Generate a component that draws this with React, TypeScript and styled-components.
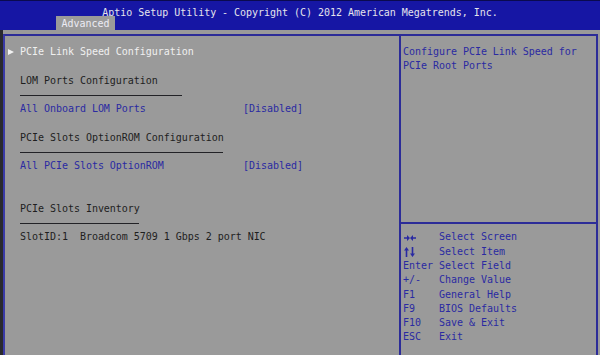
import React from "react";
import styled, { createGlobalStyle } from "styled-components";

const ROW = 14.28;
const BLUE = "#2a2aa2";

const Global = createGlobalStyle`
  html, body { margin: 0; padding: 0; background: #9a9a9a; }
  body {
    width: 600px; height: 355px; overflow: hidden;
    font-family: "DejaVu Sans Mono", "Liberation Mono", monospace;
    font-size: 10px;
    letter-spacing: -0.03px;
  }
`;

const Screen = styled.div`
  width: 600px;
  height: 355px;
  display: flex;
  flex-direction: column;
  background: #9a9a9a;
  overflow: hidden;
`;

const Header = styled.header`
  background: #1616a4;
  height: 30px;
  flex-shrink: 0;
  border-top: 1px solid #0a0a50;
  box-sizing: border-box;
  display: flex;
  flex-direction: column;
`;

const Title = styled.div`
  color: #e4e4ec;
  text-align: center;
  line-height: 14px;
  padding-top: 5px;
  height: 15px;
  box-sizing: border-box;
  flex-shrink: 0;
`;

const TabRow = styled.nav`
  display: flex;
  padding-left: 56px;
  margin-top: auto;
  height: 14px;
  flex-shrink: 0;
`;

const Tab = styled.div`
  background: #9a9a9a;
  color: #ececf4;
  width: 59px;
  height: 14px;
  line-height: 15px;
  text-align: center;
`;

const Body = styled.main`
  flex: 1;
  display: flex;
  padding: 4px 2px 0 0;
  border-left: 3px solid #2a2a2e;
  min-height: 0;
`;

const Frame = styled.section`
  flex: 1;
  display: grid;
  grid-template-columns: 394px 2px 1fr;
  border: 2px solid #2c2c98;
  border-bottom: none;
  border-left-color: #3a3aa6;
`;

const Divider = styled.div`
  background: #2c2c98;
`;

const Panel = styled.div<{ $pad: number }>`
  display: grid;
  grid-auto-rows: ${ROW}px;
  align-content: start;
  padding-top: 9px;
  padding-left: ${(p) => p.$pad}px;
`;

const Row = styled.div`
  display: grid;
  grid-template-columns: 15px 223px 1fr;
  align-items: center;
  line-height: ${ROW}px;
  white-space: pre;
`;

const Marker = styled.span`
  display: flex;
  align-items: center;
  padding-left: 3px;
`;

const Triangle = styled.span`
  width: 0;
  height: 0;
  border-top: 3.5px solid transparent;
  border-bottom: 3.5px solid transparent;
  border-left: 6px solid #f2f2f2;
`;

type Tone = "white" | "dark" | "blue";
const toneColor: Record<Tone, string> = {
  white: "#f0f0f0",
  dark: "#1e1e1e",
  blue: BLUE,
};

const Label = styled.span<{ $tone: Tone }>`
  color: ${(p) => toneColor[p.$tone]};
`;

const Value = styled.span`
  color: ${BLUE};
`;

const RuleRow = styled.div`
  display: flex;
  align-items: center;
  padding-left: 15px;
`;

const Rule = styled.div<{ $w: number }>`
  width: ${(p) => p.$w}px;
  height: 1px;
  background: #222226;
  margin-top: 1px;
`;

const Help = styled.p`
  grid-row: 1 / span 2;
  margin: 0;
  color: ${BLUE};
  line-height: ${ROW}px;
  width: 190px;
`;

const HelpRule = styled.div`
  grid-row: 13;
  align-self: center;
  height: 2px;
  background: #2c2c98;
  margin-left: -2px;
  margin-top: -1px;
`;

const Legend = styled.div`
  grid-row: 14 / span 8;
  display: grid;
  grid-auto-rows: ${ROW}px;
`;

const KeyRow = styled.div`
  display: grid;
  grid-template-columns: 36px 1fr;
  align-items: center;
  line-height: ${ROW}px;
  color: ${BLUE};
  white-space: pre;
`;

const KeyIcon = styled.svg`
  display: block;
  margin-left: 1px;
`;

const LeftRight = () => (
  <KeyIcon width="12" height="8" viewBox="0 0 12 8" aria-label="→←">
    <path d="M0 4H4.5M7.5 4H12" stroke={BLUE} strokeWidth="1.4" />
    <path d="M3 1L6 4L3 7Z M9 1L6 4L9 7Z" fill={BLUE} />
  </KeyIcon>
);

const UpDown = () => (
  <KeyIcon width="12" height="10" viewBox="0 0 12 10" aria-label="↑↓">
    <path d="M2.5 10V2.5M8.5 0V7.5" stroke={BLUE} strokeWidth="1.6" />
    <path d="M0 3.5L2.5 0L5 3.5Z M6 6.5L8.5 10L11 6.5Z" fill={BLUE} />
  </KeyIcon>
);

type Item =
  | { kind: "item"; label: string; tone: Tone; value?: string; arrow?: boolean }
  | { kind: "rule"; width: number }
  | { kind: "blank" };

const items: Item[] = [
  { kind: "item", label: "PCIe Link Speed Configuration", tone: "white", arrow: true },
  { kind: "blank" },
  { kind: "item", label: "LOM Ports Configuration", tone: "dark" },
  { kind: "rule", width: 162 },
  { kind: "item", label: "All Onboard LOM Ports", tone: "blue", value: "[Disabled]" },
  { kind: "blank" },
  { kind: "item", label: "PCIe Slots OptionROM Configuration", tone: "dark" },
  { kind: "rule", width: 203 },
  { kind: "item", label: "All PCIe Slots OptionROM", tone: "blue", value: "[Disabled]" },
  { kind: "blank" },
  { kind: "blank" },
  { kind: "item", label: "PCIe Slots Inventory", tone: "dark" },
  { kind: "rule", width: 119 },
  { kind: "item", label: "SlotID:1  Broadcom 5709 1 Gbps 2 port NIC", tone: "dark" },
];

const keys: { id: string; key: React.ReactNode; desc: string }[] = [
  { id: "lr", key: <LeftRight />, desc: "Select Screen" },
  { id: "ud", key: <UpDown />, desc: "Select Item" },
  { id: "enter", key: "Enter", desc: "Select Field" },
  { id: "pm", key: "+/-", desc: "Change Value" },
  { id: "f1", key: "F1", desc: "General Help" },
  { id: "f9", key: "F9", desc: "BIOS Defaults" },
  { id: "f10", key: "F10", desc: "Save & Exit" },
  { id: "esc", key: "ESC", desc: "Exit" },
];

export default function App() {
  return (
    <>
      <Global />
      <Screen>
        <Header>
          <Title>Aptio Setup Utility - Copyright (C) 2012 American Megatrends, Inc.</Title>
          <TabRow>
            <Tab>Advanced</Tab>
          </TabRow>
        </Header>
        <Body>
          <Frame>
            <Panel $pad={0}>
              {items.map((it, i) => {
                if (it.kind === "blank") return <div key={i} />;
                if (it.kind === "rule")
                  return (
                    <RuleRow key={i}>
                      <Rule $w={it.width} />
                    </RuleRow>
                  );
                return (
                  <Row key={i}>
                    <Marker>{it.arrow ? <Triangle /> : null}</Marker>
                    <Label $tone={it.tone}>{it.label}</Label>
                    {it.value ? <Value>{it.value}</Value> : <span />}
                  </Row>
                );
              })}
            </Panel>
            <Divider />
            <Panel $pad={2}>
              <Help>Configure PCIe Link Speed for PCIe Root Ports</Help>
              <HelpRule />
              <Legend>
                {keys.map((k) => (
                  <KeyRow key={k.id}>
                    <span>{k.key}</span>
                    <span>{k.desc}</span>
                  </KeyRow>
                ))}
              </Legend>
            </Panel>
          </Frame>
        </Body>
      </Screen>
    </>
  );
}
